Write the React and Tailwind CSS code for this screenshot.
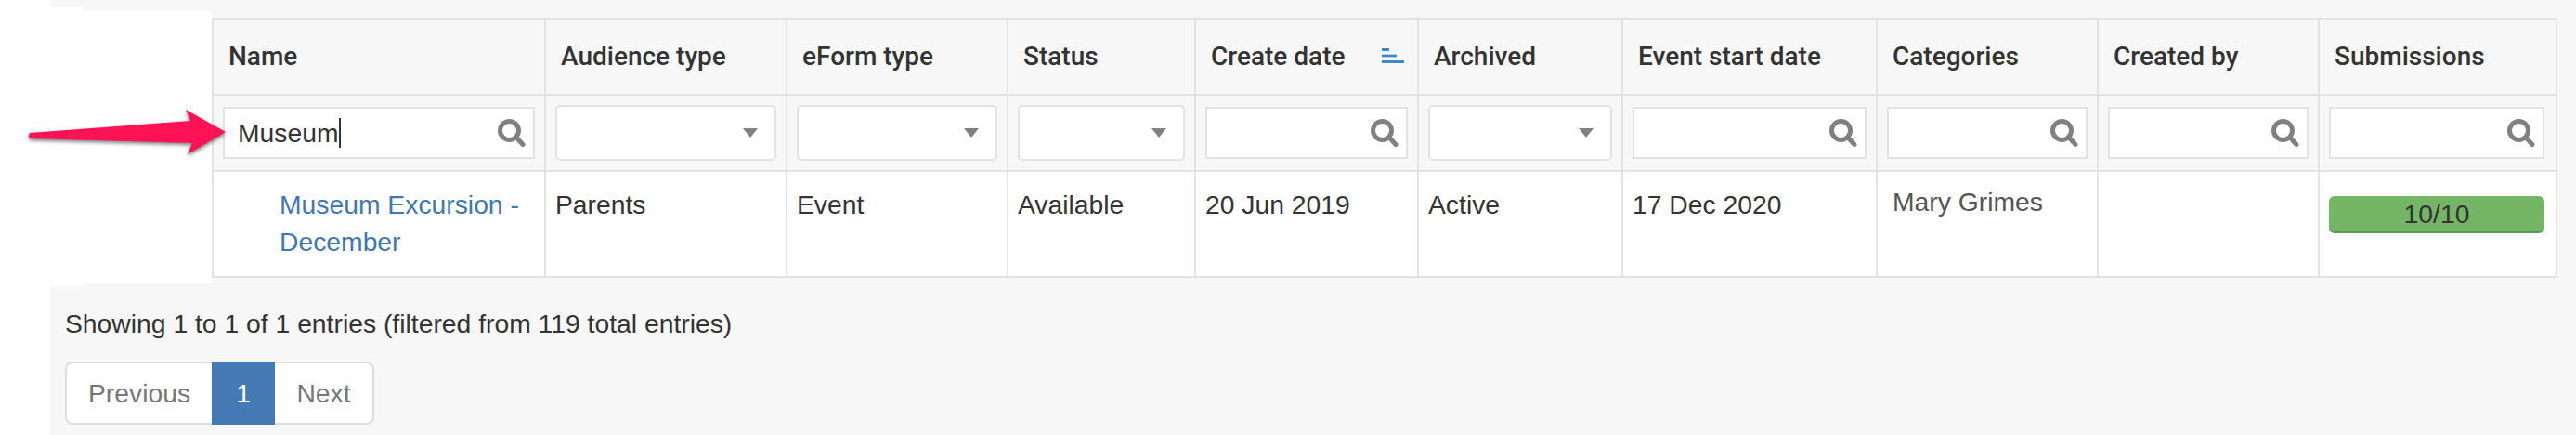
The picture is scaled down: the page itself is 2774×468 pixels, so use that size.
const columns = [
  { title: "Name", width: "w-[358px]", filter: "text", value: "Museum", pad: "px-[10px]" },
  { title: "Audience type", width: "w-[260px]", filter: "select", pad: "px-[10px]" },
  { title: "eForm type", width: "w-[238px]", filter: "select", pad: "px-[10px]" },
  { title: "Status", width: "w-[202px]", filter: "select", pad: "px-[10px]" },
  { title: "Create date", width: "w-[240px]", filter: "text", sorted: true, pad: "px-[10px]" },
  { title: "Archived", width: "w-[220px]", filter: "select", pad: "px-[10px]" },
  { title: "Event start date", width: "w-[274px]", filter: "text", pad: "px-[10px]" },
  { title: "Categories", width: "w-[238px]", filter: "text", pad: "px-[10px]" },
  { title: "Created by", width: "w-[238px]", filter: "text", pad: "px-[10px]" },
  { title: "Submissions", width: "w-[256px]", filter: "text", pad: "pl-[10px] pr-[12px]" },
];

function SearchIcon() {
  return (
    <svg className="w-[30px] h-[30px] shrink-0" viewBox="0 0 30 30" fill="none" stroke="#808080">
      <circle cx="12.5" cy="12.5" r="10" strokeWidth="5" />
      <path d="M20 20l7 7.5" strokeWidth="5" strokeLinecap="round" />
    </svg>
  );
}

function SortIcon() {
  return (
    <svg className="w-[24px] h-[18px] shrink-0" viewBox="0 0 24 18">
      <rect x="0" y="0" width="8" height="3" fill="#3d87cc" />
      <rect x="0" y="6" width="16" height="4" fill="#b5d0ea" />
      <rect x="0" y="7" width="16" height="2" fill="#3d87cc" />
      <rect x="0" y="13" width="24" height="3" fill="#3d87cc" />
    </svg>
  );
}

function TextFilter({ value }) {
  return (
    <div className="flex items-center justify-between w-full h-[56px] bg-white border-2 border-[#e3e3e3] pl-[14px] pr-[8px]">
      <div className="flex items-center h-[32px]">
        {value}
        {value && <span className="w-[2px] h-[32px] bg-[#333]" />}
      </div>
      <SearchIcon />
    </div>
  );
}

function SelectFilter() {
  return (
    <div className="flex items-center justify-end w-full h-[60px] bg-white border-2 border-[#e3e3e3] rounded-[5px] pr-[18px]">
      <svg className="w-[16px] h-[10px]" viewBox="0 0 16 10">
        <path d="M0 0h16l-8 10z" fill="#808080" />
      </svg>
    </div>
  );
}

export default function App() {
  return (
    <div className="relative h-[468px] overflow-hidden bg-white text-[28.3px] text-[#333] font-['Liberation_Sans',Arial,sans-serif]">
      {/* white patches left by the screenshot annotation */}
      <div className="absolute left-[54px] top-[7px] w-[35px] h-[301px] bg-white z-10" />
      <div className="absolute left-[89px] top-[12px] w-[139px] h-[293px] bg-white z-10" />

      <svg className="absolute left-[28px] top-[112px] w-[220px] h-[62px] z-20 drop-shadow-[0_2px_2px_rgba(0,0,0,0.55)]" viewBox="0 0 220 62">
        <path d="M4 31 L177 18 L172 6 L215 30 L174 54 L179 42 L4 37 Q2 34 4 31z" fill="#ff1356" />
      </svg>

      <div className="ml-[54px] h-full bg-[#f7f7f7] pt-[19px]">
        <table className="ml-[174px] w-[2524px] table-fixed border-collapse">
          <thead>
            <tr className="h-[82px]">
              {columns.map((col) => (
                <th key={col.title} className={`${col.width} border-2 border-[#e3e3e3] pl-[16px] pr-[14px] text-left font-medium text-[28px] font-['Roboto',sans-serif]`}>
                  <div className="flex items-center justify-between">
                    {col.title}
                    {col.sorted && <SortIcon />}
                  </div>
                </th>
              ))}
            </tr>
            <tr className="h-[82px]">
              {columns.map((col) => (
                <td key={col.title} className={`${col.pad} border-2 border-[#e3e3e3] font-normal`}>
                  {col.filter === "text" ? <TextFilter value={col.value} /> : <SelectFilter />}
                </td>
              ))}
            </tr>
          </thead>
          <tbody>
            <tr className="h-[114px] bg-white align-top leading-[40px]">
              <td className="border-2 border-[#e3e3e3] pl-[71px] pr-[10px] pt-[15px]">
                <a className="text-[#4178b0]">Museum Excursion - December</a>
              </td>
              <td className="border-2 border-[#e3e3e3] px-[10px] pt-[15px]">Parents</td>
              <td className="border-2 border-[#e3e3e3] px-[10px] pt-[15px]">Event</td>
              <td className="border-2 border-[#e3e3e3] px-[10px] pt-[15px]">Available</td>
              <td className="border-2 border-[#e3e3e3] px-[10px] pt-[15px]">20 Jun 2019</td>
              <td className="border-2 border-[#e3e3e3] px-[10px] pt-[15px]">Active</td>
              <td className="border-2 border-[#e3e3e3] px-[10px] pt-[15px]">17 Dec 2020</td>
              <td className="border-2 border-[#e3e3e3] px-[16px] pt-[12px] text-[#555]">Mary Grimes</td>
              <td className="border-2 border-[#e3e3e3] px-[10px] pt-[15px]"></td>
              <td className="border-2 border-[#e3e3e3] pl-[10px] pr-[12px] pt-[26px]">
                <div className="h-[40px] rounded-[6px] bg-[#74b566] border-b-2 border-[#5f9a53] flex items-center justify-center">10/10</div>
              </td>
            </tr>
          </tbody>
        </table>

        <div className="pl-[16px] pt-[29px] leading-[40px]">
          Showing 1 to 1 of 1 entries (filtered from 119 total entries)
        </div>
        <div className="ml-[16px] mt-[21px] flex w-[333px] h-[68px] text-[#777]">
          <div className="flex flex-1 items-center justify-center bg-white border-2 border-r-0 border-[#ddd] rounded-l-[8px]">Previous</div>
          <div className="flex w-[68px] items-center justify-center bg-[#4479b3] text-white">1</div>
          <div className="flex w-[107px] items-center justify-center bg-white border-2 border-l-0 border-[#ddd] rounded-r-[8px]">Next</div>
        </div>
      </div>
    </div>
  );
}
